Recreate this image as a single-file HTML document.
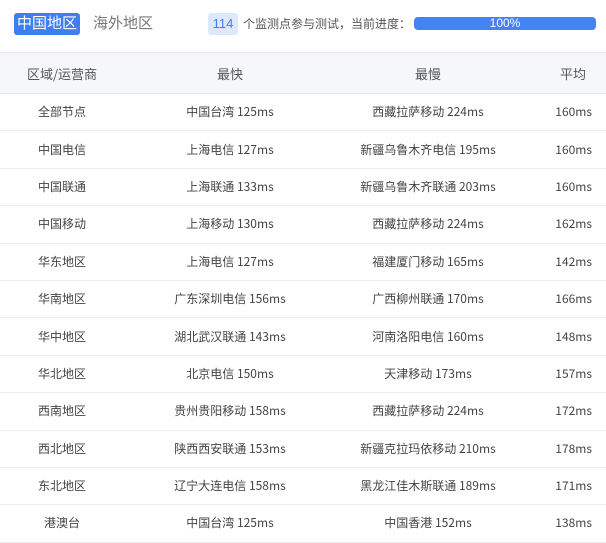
<!DOCTYPE html>
<html><head><meta charset="utf-8"><style>
body{margin:0;width:606px;height:541px;background:#fff;font-family:"Liberation Sans","Noto Sans CJK SC",sans-serif;color:#333;overflow:hidden;position:relative}
.btn{position:absolute;left:14px;top:13px;width:66px;height:22px;background:#3f7ef0;color:#fff;border-radius:3px;font-size:15px;line-height:22px;text-align:center}
.t2{position:absolute;left:93px;top:13px;font-size:15px;line-height:22px;color:#777}
.badge{position:absolute;left:208px;top:13px;width:30px;height:22px;background:#dde8fb;color:#3f7ef0;border-radius:3px;font-size:13px;line-height:22px;text-align:center}
.txt{position:absolute;left:243px;top:13px;font-size:12px;line-height:22px;color:#555}
.bar{position:absolute;left:414px;top:17px;width:182px;height:13px;background:#4582f2;border-radius:4px;color:#fff;font-size:12px;line-height:13px;text-align:center}
table{position:absolute;left:0;top:52px;width:606px;border-collapse:collapse;font-size:12px;font-family:"Noto Sans CJK SC",sans-serif}
th{height:40px;background:#f5f7fa;font-weight:normal;font-size:13px;color:#555;border-top:1px solid #e6e6e6;border-bottom:1px solid #e6e6e6;padding:0}
td{height:36.4px;border-bottom:1px solid #ebeef5;text-align:center;padding:0;color:#444;line-height:18px}
td:last-child{text-align:right;padding-right:14px}
</style></head><body>
<div class="btn">中国地区</div><div class="t2">海外地区</div>
<div class="badge">114</div><div class="txt">个监测点参与测试，当前进度：</div>
<div class="bar">100%</div>
<table>
<colgroup><col style="width:124px"><col style="width:212px"><col style="width:184px"><col style="width:86px"></colgroup>
<tr><th>区域/运营商</th><th>最快</th><th>最慢</th><th style="text-align:right;padding-right:20px">平均</th></tr>
<tr><td>全部节点</td><td>中国台湾 125ms</td><td>西藏拉萨移动 224ms</td><td>160ms</td></tr>
<tr><td>中国电信</td><td>上海电信 127ms</td><td>新疆乌鲁木齐电信 195ms</td><td>160ms</td></tr>
<tr><td>中国联通</td><td>上海联通 133ms</td><td>新疆乌鲁木齐联通 203ms</td><td>160ms</td></tr>
<tr><td>中国移动</td><td>上海移动 130ms</td><td>西藏拉萨移动 224ms</td><td>162ms</td></tr>
<tr><td>华东地区</td><td>上海电信 127ms</td><td>福建厦门移动 165ms</td><td>142ms</td></tr>
<tr><td>华南地区</td><td>广东深圳电信 156ms</td><td>广西柳州联通 170ms</td><td>166ms</td></tr>
<tr><td>华中地区</td><td>湖北武汉联通 143ms</td><td>河南洛阳电信 160ms</td><td>148ms</td></tr>
<tr><td>华北地区</td><td>北京电信 150ms</td><td>天津移动 173ms</td><td>157ms</td></tr>
<tr><td>西南地区</td><td>贵州贵阳移动 158ms</td><td>西藏拉萨移动 224ms</td><td>172ms</td></tr>
<tr><td>西北地区</td><td>陕西西安联通 153ms</td><td>新疆克拉玛依移动 210ms</td><td>178ms</td></tr>
<tr><td>东北地区</td><td>辽宁大连电信 158ms</td><td>黑龙江佳木斯联通 189ms</td><td>171ms</td></tr>
<tr><td>港澳台</td><td>中国台湾 125ms</td><td>中国香港 152ms</td><td>138ms</td></tr>
</table>
</body></html>
